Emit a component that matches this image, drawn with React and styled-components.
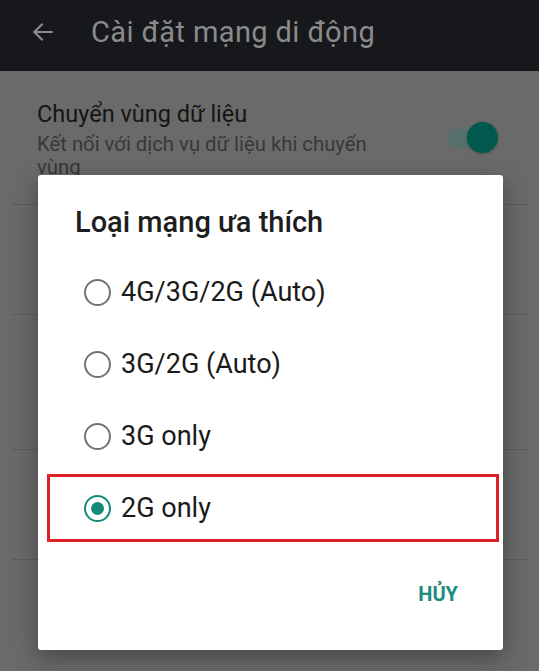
import React, { useState } from "react";
import styled, { createGlobalStyle } from "styled-components";

const GlobalStyle = createGlobalStyle`
  html, body {
    margin: 0;
    padding: 0;
    background: #6a6a6a;
  }
  body {
    font-family: Roboto, "Noto Sans", "Liberation Sans", sans-serif;
  }
`;

const Screen = styled.div`
  position: relative;
  width: 539px;
  height: 671px;
  overflow: hidden;
  background: #6a6a6a;
`;

const Toolbar = styled.div`
  height: 71px;
  background: #16181b;
  display: flex;
  align-items: center;
  padding: 0 0 8px 30px;
  box-sizing: border-box;
  gap: 35px;
  color: #8a8b8c;
`;

const ToolbarTitle = styled.div`
  font-size: 29px;
  letter-spacing: 0.4px;
`;

const SettingsList = styled.div`
  display: flex;
  flex-direction: column;
`;

const SettingRow = styled.div`
  height: ${(p) => p.h}px;
  margin: 0 11px 0 12px;
  border-bottom: 1px solid #5d5d5d;
  display: flex;
  align-items: flex-start;
  justify-content: space-between;
  padding: ${(p) => (p.first ? "29px 30px 0 25px" : "0")};
  box-sizing: border-box;
`;

const SettingText = styled.div`
  display: flex;
  flex-direction: column;
  gap: 5px;
  width: 360px;
`;

const SettingTitle = styled.div`
  font-size: 23.5px;
  color: #151515;
`;

const SettingSub = styled.div`
  font-size: 20.3px;
  line-height: 23px;
  color: #383838;
`;

const Switch = styled.div`
  position: relative;
  width: 50px;
  height: 32px;
  margin-top: 22px;
  flex-shrink: 0;

  &::before {
    content: "";
    position: absolute;
    left: 0;
    top: 7px;
    width: 40px;
    height: 19px;
    border-radius: 10px;
    background: #56706b;
  }
  &::after {
    content: "";
    position: absolute;
    right: 0;
    top: 0;
    width: 31px;
    height: 31px;
    border-radius: 50%;
    background: #01594d;
    box-shadow: 0 1px 3px rgba(0, 0, 0, 0.25);
  }
`;

const Dialog = styled.div`
  position: absolute;
  left: 38px;
  top: 175px;
  width: 465px;
  height: 475px;
  background: #ffffff;
  border-radius: 3px;
  box-shadow: 0 8px 24px rgba(0, 0, 0, 0.35);
  box-sizing: border-box;
  padding-top: 30px;
  display: flex;
  flex-direction: column;
`;

const DialogTitle = styled.div`
  font-size: 29px;
  line-height: 34px;
  font-weight: 500;
  color: #1e1e1e;
  padding-left: 37px;
  margin-bottom: 17px;
`;

const Options = styled.div`
  display: flex;
  flex-direction: column;
  padding: 0 4px 0 9px;
`;

const Option = styled.label`
  height: ${(p) => (p.highlight ? 68 : 72)}px;
  margin: ${(p) => (p.highlight ? "2px 0" : "0")};
  display: flex;
  align-items: center;
  gap: 10px;
  padding-left: 34px;
  box-sizing: border-box;
  font-size: 27px;
  color: #1a1a1a;
  cursor: pointer;
  border: 3.5px solid ${(p) => (p.highlight ? "#e01f2b" : "transparent")};
`;

const Radio = styled.span`
  width: 27px;
  height: 27px;
  border-radius: 50%;
  box-sizing: border-box;
  border: 2.6px solid ${(p) => (p.checked ? "#138a7b" : "#737373")};
  display: flex;
  align-items: center;
  justify-content: center;
  flex-shrink: 0;

  &::after {
    content: "";
    width: 13px;
    height: 13px;
    border-radius: 50%;
    background: ${(p) => (p.checked ? "#138a7b" : "transparent")};
  }
`;

const Actions = styled.div`
  display: flex;
  justify-content: flex-end;
  padding: 38px 45px 0 0;
`;

const TextButton = styled.button`
  border: none;
  background: none;
  font-family: inherit;
  font-size: 20px;
  font-weight: 700;
  color: #1c8c7e;
  padding: 0;
  cursor: pointer;
`;

const BackArrow = () => (
  <svg width="26" height="26" viewBox="0 0 24 24" fill="none">
    <path
      d="M20 12H4.5M11 5l-7 7 7 7"
      stroke="#8a8b8c"
      strokeWidth="2"
      strokeLinecap="square"
    />
  </svg>
);

const options = ["4G/3G/2G (Auto)", "3G/2G (Auto)", "3G only", "2G only"];

const App = () => {
  const [selected, setSelected] = useState(3);

  return (
    <Screen>
      <GlobalStyle />
      <Toolbar>
        <BackArrow />
        <ToolbarTitle>Cài đặt mạng di động</ToolbarTitle>
      </Toolbar>
      <SettingsList>
        <SettingRow h={134} first>
          <SettingText>
            <SettingTitle>Chuyển vùng dữ liệu</SettingTitle>
            <SettingSub>Kết nối với dịch vụ dữ liệu khi chuyển vùng</SettingSub>
          </SettingText>
          <Switch />
        </SettingRow>
        <SettingRow h={110} />
        <SettingRow h={135} />
        <SettingRow h={110} />
      </SettingsList>

      <Dialog>
        <DialogTitle>Loại mạng ưa thích</DialogTitle>
        <Options>
          {options.map((o, i) => (
            <Option
              key={o}
              highlight={i === 3}
              onClick={() => setSelected(i)}
            >
              <Radio checked={selected === i} />
              {o}
            </Option>
          ))}
        </Options>
        <Actions>
          <TextButton>HỦY</TextButton>
        </Actions>
      </Dialog>
    </Screen>
  );
};

export default App;
